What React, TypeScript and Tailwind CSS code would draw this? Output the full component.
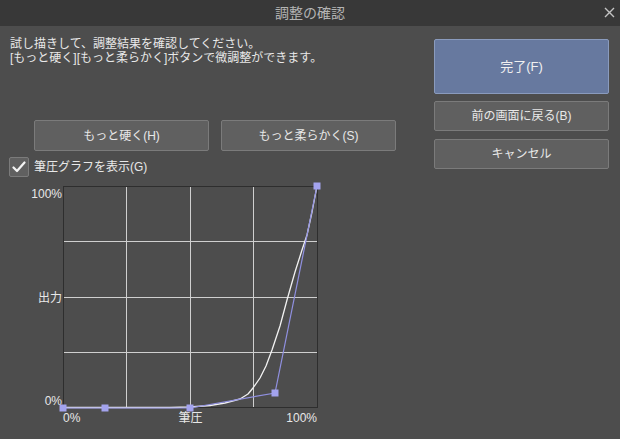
import React from "react";

const FONT = { fontFamily: '"Liberation Sans", "Noto Sans CJK JP", sans-serif' };

const curve: [number, number][] = [
  [0, 221.5], [107, 221.5], [127, 221], [147, 219.5], [162, 217], [177, 213],
  [185, 208], [190, 202], [197, 192], [203, 180], [209, 164], [217, 140],
  [224, 114], [232, 86], [239, 64], [244, 49], [249, 26], [254, 0],
];

const controls: [number, number][] = [
  [0, 222], [42, 222], [127, 222], [212, 207], [254, 0],
];

function PressureGraph() {
  return (
    <svg width={256} height={223} viewBox="0 0 256 223" className="block overflow-visible">
      <g stroke="#cfcfcf" strokeWidth={1} shapeRendering="crispEdges">
        <line x1={63.5} y1={0} x2={63.5} y2={222} />
        <line x1={127.5} y1={0} x2={127.5} y2={222} />
        <line x1={190.5} y1={0} x2={190.5} y2={222} />
        <line x1={0} y1={55.5} x2={255} y2={55.5} />
        <line x1={0} y1={111.5} x2={255} y2={111.5} />
        <line x1={0} y1={166.5} x2={255} y2={166.5} />
      </g>
      <rect x={0.5} y={0.5} width={254} height={221} fill="none" stroke="#2e2e2e" strokeWidth={1} shapeRendering="crispEdges" />
      <polyline
        points={curve.map(([x, y]) => `${x},${y}`).join(" ")}
        fill="none"
        stroke="#f2f2f2"
        strokeWidth={1.3}
        strokeLinejoin="round"
      />
      <polyline
        points={controls.map(([x, y]) => `${x},${y}`).join(" ")}
        fill="none"
        stroke="#9090e0"
        strokeWidth={1.2}
      />
      {controls.map(([x, y], i) => (
        <rect key={i} x={x - 3.5} y={y - 3.5} width={7} height={7} fill="#a3a3ee" />
      ))}
    </svg>
  );
}

function GrayButton({ children, className = "" }: { children: React.ReactNode; className?: string }) {
  return (
    <div
      className={`flex items-center justify-center rounded-[2px] border border-[#7b7b7b] bg-[#606060] text-[12px] text-[#e8e8e8] ${className}`}
    >
      {children}
    </div>
  );
}

export default function App() {
  return (
    <div className="h-[439px] w-[620px] overflow-hidden bg-[#4d4d4d] text-[#e8e8e8]" style={FONT}>
      <div className="relative flex h-[26px] items-center justify-center bg-[#383838]">
        <span className="text-[14px] text-[#b4b4b4]">調整の確認</span>
        <svg className="absolute right-[5px] top-[7px]" width={11} height={11} viewBox="0 0 11 11">
          <path d="M1 1 L10 10 M10 1 L1 10" stroke="#c4c4c4" strokeWidth={1.4} />
        </svg>
      </div>

      <div className="flex">
        <div className="w-[434px] pl-[10px] pt-[11px]">
          <div className="text-[12px] leading-[14px]">
            <div>試し描きして、調整結果を確認してください。</div>
            <div>[もっと硬く][もっと柔らかく]ボタンで微調整ができます。</div>
          </div>

          <div className="ml-[24px] mt-[55px] flex gap-[12px]">
            <GrayButton className="h-[31px] w-[175px]">もっと硬く(H)</GrayButton>
            <GrayButton className="h-[31px] w-[175px]">もっと柔らかく(S)</GrayButton>
          </div>

          <div className="-ml-[1px] mt-[6px] flex items-center gap-[5px]">
            <div className="flex h-[20px] w-[20px] items-center justify-center rounded-[2px] border border-[#7b7b7b] bg-[#606060]">
              <svg width={14} height={12} viewBox="0 0 14 12">
                <path d="M1.5 6.5 L5 10 L12.5 1.5" fill="none" stroke="#f4f4f4" strokeWidth={2.2} strokeLinecap="round" strokeLinejoin="round" />
              </svg>
            </div>
            <span className="text-[12px] leading-[14px]">筆圧グラフを表示(G)</span>
          </div>

          <div className="mt-[9px] flex">
            <div className="flex h-[222px] w-[53px] flex-col items-end justify-between pr-[1px] pt-[1px] text-[12px] leading-[14px]">
              <span>100%</span>
              <span>出力</span>
              <span>0%</span>
            </div>
            <div className="flex flex-col">
              <PressureGraph />
              <div className="mt-[2px] grid w-[255px] grid-cols-3 text-[12px] leading-[14px]">
                <span className="text-left">0%</span>
                <span className="text-center">筆圧</span>
                <span className="pr-[1px] text-right">100%</span>
              </div>
            </div>
          </div>
        </div>

        <div className="flex w-[175px] flex-col pt-[13px]">
          <div className="flex h-[55px] items-center justify-center rounded-[2px] border border-[#8a9bbd] bg-[#67799f] text-[13px] text-[#f0f0f0]">
            完了(F)
          </div>
          <GrayButton className="mt-[7px] h-[30px]">前の画面に戻る(B)</GrayButton>
          <GrayButton className="mt-[8px] h-[30px]">キャンセル</GrayButton>
        </div>
      </div>
    </div>
  );
}
